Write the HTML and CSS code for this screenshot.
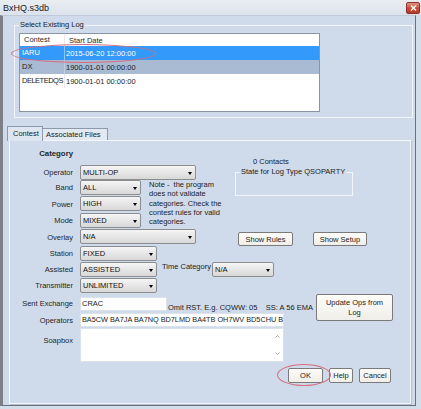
FILE: index.html
```html
<!DOCTYPE html>
<html lang="en">
<head>
    <meta charset="UTF-8">
    <title>BxHQ.s3db</title>
    <link rel="stylesheet" href="styles.css">
</head>
<body>
    <div class="window">
        <div class="titlebar">
            <span class="title">BxHQ.s3db</span>
            <span class="close">
                <svg width="7" height="6" viewBox="0 0 7 6"><path d="M1 0.5 L6 5.5 M6 0.5 L1 5.5" stroke="#fff" stroke-width="1.4"/></svg>
            </span>
        </div>
        <div class="client">
            <fieldset class="log-group">
                <legend>Select Existing Log</legend>
                <div class="log-list">
                    <div class="log-row head"><span class="c1">Contest</span><span class="c2">Start Date</span></div>
                    <div class="log-row selected"><span class="c1">IARU</span><span class="c2">2015-06-20 12:00:00</span></div>
                    <div class="log-row hot"><span class="c1">DX</span><span class="c2">1900-01-01 00:00:00</span></div>
                    <div class="log-row"><span class="c1 tight">DELETEDQS</span><span class="c2">1900-01-01 00:00:00</span></div>
                </div>
                <span class="mark mark-log"></span>
            </fieldset>

            <div class="tabs">
                <div class="tab active">Contest</div>
                <div class="tab">Associated Files</div>
            </div>
            <div class="tab-panel">
                <div class="form">
                    <div class="lbl heading">Category</div>

                    <div class="contacts">
                        <div class="contacts-count">0 Contacts</div>
                        <fieldset class="state-group">
                            <legend>State for Log Type QSOPARTY</legend>
                        </fieldset>
                    </div>

                    <div class="lbl r-op">Operator</div>
                    <div class="ctl r-op"><div class="combo w116"><span>MULTI-OP</span><i class="arrow"></i></div></div>

                    <div class="lbl r-band">Band</div>
                    <div class="ctl r-band"><div class="combo w61"><span>ALL</span><i class="arrow"></i></div></div>

                    <div class="note">Note -&nbsp; the program<br>does not validate<br>categories. Check the<br>contest rules for valid<br>categories.</div>

                    <div class="lbl r-power">Power</div>
                    <div class="ctl r-power"><div class="combo w61"><span>HIGH</span><i class="arrow"></i></div></div>

                    <div class="lbl r-mode">Mode</div>
                    <div class="ctl r-mode"><div class="combo w61"><span>MIXED</span><i class="arrow"></i></div></div>

                    <div class="lbl r-overlay">Overlay</div>
                    <div class="ctl r-overlay">
                        <div class="combo w116"><span>N/A</span><i class="arrow"></i></div>
                        <div class="btn btn-rules">Show Rules</div>
                        <div class="btn btn-setup">Show Setup</div>
                    </div>

                    <div class="lbl r-station">Station</div>
                    <div class="ctl r-station"><div class="combo w77"><span>FIXED</span><i class="arrow"></i></div></div>

                    <div class="lbl r-assisted">Assisted</div>
                    <div class="ctl r-assisted">
                        <div class="combo w77"><span>ASSISTED</span><i class="arrow"></i></div>
                        <span class="time-label">Time Category</span>
                        <div class="combo w62"><span>N/A</span><i class="arrow"></i></div>
                    </div>

                    <div class="lbl r-tx">Transmitter</div>
                    <div class="ctl r-tx"><div class="combo w77"><span>UNLIMITED</span><i class="arrow"></i></div></div>

                    <div class="lbl r-sent">Sent Exchange</div>
                    <div class="ctl r-sent">
                        <div class="field sent-field">CRAC</div>
                        <span class="hint">Omit RST. E.g. CQWW: 05    SS: A 56 EMA</span>
                    </div>

                    <div class="btn btn-update">Update Ops from<br>Log</div>

                    <div class="lbl r-ops">Operators</div>
                    <div class="ctl r-ops"><div class="field ops-field">BA5CW BA7JA BA7NQ BD7LMD BA4TB OH7WV BD5CHU B</div></div>

                    <div class="lbl r-soap soap-label">Soapbox</div>
                    <div class="ctl r-soap">
                        <div class="memo">
                            <div class="memo-scroll">
                                <svg width="5" height="3" viewBox="0 0 5 3"><path d="M0.5 2.5 L2.5 0.5 L4.5 2.5" fill="none" stroke="#9a9a9a" stroke-width="0.9"/></svg>
                                <svg width="5" height="3" viewBox="0 0 5 3"><path d="M0.5 0.5 L2.5 2.5 L4.5 0.5" fill="none" stroke="#9a9a9a" stroke-width="0.9"/></svg>
                            </div>
                        </div>
                    </div>

                    <div class="ctl r-actions actions">
                        <div class="btn btn-ok">OK</div>
                        <div class="btn btn-help">Help</div>
                        <div class="btn btn-cancel">Cancel</div>
                        <span class="mark mark-ok"></span>
                    </div>
                </div>
            </div>
        </div>
    </div>
</body>
</html>
```

FILE: styles.css
```css
body {
    margin: 0;
    font-family: "Liberation Sans", Arial, sans-serif;
    font-size: 7.5px;
    color: #1c1c1c;
    white-space: nowrap;
}

.window {
    width: 421px;
    height: 409px;
    background-color: #d3deeb;
    overflow: hidden;
}

.titlebar {
    height: 15px;
    display: flex;
    align-items: center;
    justify-content: space-between;
    padding: 0 1px 0 3px;
    box-sizing: border-box;
    background: linear-gradient(#eaeef3, #dbe2eb);
}

.title {
    font-size: 9px;
    color: #1a1a1a;
}

.close {
    width: 14px;
    height: 12px;
    box-sizing: border-box;
    border: 1px solid #8f3226;
    border-radius: 2px;
    background: linear-gradient(#e29283, #c94a36 55%, #b93a28);
    display: flex;
    align-items: center;
    justify-content: center;
}

.client {
    width: 416px;
    height: 391px;
    box-sizing: border-box;
    border-left: 3px solid #7c7f85;
    border-right: 1px solid #68717d;
    border-bottom: 1px solid #68717d;
    border-top: 1px solid #bfcad8;
    background-color: #cfdbea;
}

/* group boxes */
fieldset {
    margin: 0;
    min-width: 0;
    box-sizing: border-box;
    border: 1px solid #f2f6fa;
}

legend {
    padding: 0 1px;
    line-height: 10px;
    color: #1c1c1c;
}

.log-group {
    position: relative;
    margin: 4px 0 0 11px;
    width: 399px;
    height: 98px;
    padding: 3px 4px 0 4px;
}

.log-list {
    width: 301px;
    height: 79px;
    box-sizing: border-box;
    border: 1px solid #8a94a3;
    background-color: #fff;
}

.log-row {
    display: flex;
    height: 14px;
    align-items: center;
}

.log-row .c1 {
    flex-shrink: 0;
    width: 45px;
    padding-left: 2px;
    box-sizing: border-box;
    border-right: 1px solid #e6e9ee;
    line-height: 14px;
}

.log-row .c1.tight {
    letter-spacing: -0.5px;
}

.log-row .c2 {
    padding-left: 1px;
}

.log-row.head {
    height: 12px;
    color: #2b2b2b;
}

.log-row.head .c1 {
    padding-left: 4px;
    line-height: 12px;
}

.log-row.head .c2 {
    padding-left: 4px;
}

.log-row.selected {
    background-color: #3399fa;
    color: #fff;
}

.log-row.selected .c1 {
    border-right-color: #8cc4fb;
}

.log-row.hot {
    background-color: #a9bad3;
}

.log-row.hot .c1 {
    border-right-color: #bfcde0;
}

.mark {
    position: absolute;
    box-sizing: border-box;
    border: 1px solid #d46f80;
    border-radius: 50%;
}

.mark-log {
    left: -4px;
    top: 14px;
    width: 145px;
    height: 19px;
}

/* tabs */
.tabs {
    display: flex;
    align-items: flex-end;
    height: 14px;
    margin-top: 8px;
    padding-left: 4px;
}

.tab {
    height: 12px;
    line-height: 11px;
    padding: 0 6px 0 3px;
    box-sizing: border-box;
    border: 1px solid #8c99ab;
    border-bottom: none;
    border-left: none;
    background-color: #e3e9f1;
}

.tab.active {
    position: relative;
    z-index: 1;
    width: 36px;
    height: 15px;
    line-height: 13px;
    margin-bottom: -1px;
    padding-left: 5px;
    border-left: 1px solid #8c99ab;
    background-color: #dde6f0;
}

.tab-panel {
    margin-left: 6px;
    width: 402px;
    height: 264px;
    box-sizing: border-box;
    border: 1px solid #f4f7fb;
    box-shadow: 1px 1px 0 #b3bfcf;
}

/* contest form */
.form {
    display: grid;
    grid-template-columns: 63px 1fr;
    grid-template-rows: 18px 15px 16px 17px 16px 17px 16px 16px 16px 19px 15px 34px 21px;
    column-gap: 7px;
    padding-top: 6px;
}

.lbl {
    grid-column: 1;
    justify-self: end;
    align-self: center;
    line-height: 10px;
    color: #262626;
}

.lbl.heading {
    grid-row: 1;
    align-self: start;
    font-weight: bold;
    font-size: 7.8px;
    line-height: 14px;
}

.ctl {
    grid-column: 2;
    display: flex;
    align-items: flex-start;
}

.r-op { grid-row: 2; }
.r-band { grid-row: 3; }
.r-power { grid-row: 4; }
.r-mode { grid-row: 5; }
.r-overlay { grid-row: 6; }
.r-station { grid-row: 7; }
.r-assisted { grid-row: 8; }
.r-tx { grid-row: 9; }
.r-sent { grid-row: 10; }
.r-ops { grid-row: 11; }
.r-soap { grid-row: 12; }
.r-actions { grid-row: 13; }

.combo {
    display: flex;
    align-items: center;
    justify-content: space-between;
    height: 15px;
    box-sizing: border-box;
    padding: 0 3px 0 2px;
    border: 1px solid #8c8d8f;
    border-radius: 2px;
    background: linear-gradient(#f5f5f5, #e6e6e6 50%, #d8d8d8);
    color: #111;
}

.w116 { width: 116px; }
.w61 { width: 61px; }
.w62 { width: 62px; }
.w77 { width: 77px; }

.arrow {
    width: 0;
    height: 0;
    border-top: 3px solid #000;
    border-left: 2.5px solid transparent;
    border-right: 2.5px solid transparent;
    margin-top: 1px;
}

.note {
    grid-column: 2;
    grid-row: 3 / 6;
    margin-left: 69px;
    line-height: 9.3px;
    color: #222;
}

.contacts {
    grid-column: 2;
    grid-row: 1 / 4;
    margin-left: 155px;
    align-self: start;
}

.contacts-count {
    margin-top: 10px;
    padding-left: 18px;
    line-height: 10px;
}

.state-group {
    width: 118px;
    height: 29px;
    padding: 0 4px;
}

.btn {
    box-sizing: border-box;
    border: 1px solid #7a7a7a;
    border-radius: 2px;
    background: linear-gradient(#fdfcf9, #f0eee8);
    display: flex;
    align-items: center;
    justify-content: center;
    text-align: center;
    color: #1c1c1c;
}

.btn-rules {
    width: 55px;
    height: 14px;
    margin: 3px 0 0 42px;
}

.btn-setup {
    width: 54px;
    height: 14px;
    margin: 3px 0 0 20px;
}

.time-label {
    width: 50px;
    margin-left: 5px;
    line-height: 10px;
}

.field {
    height: 14px;
    box-sizing: border-box;
    border: 1px solid #dbe2ea;
    background-color: #fff;
    padding-left: 1px;
    line-height: 12px;
    overflow: hidden;
}

.sent-field {
    width: 87px;
    margin-top: 3px;
}

.hint {
    align-self: flex-end;
    margin-left: 1px;
    line-height: 10px;
    white-space: pre;
}

.btn-update {
    grid-column: 2;
    grid-row: 10 / 12;
    align-self: start;
    margin-left: 236px;
    width: 77px;
    height: 27px;
    line-height: 10px;
}

.ops-field {
    width: 204px;
    font-size: 7.3px;
}

.soap-label {
    align-self: start;
    margin-top: 8px;
}

.memo {
    width: 204px;
    height: 34px;
    box-sizing: border-box;
    border: 1px solid #dbe2ea;
    background-color: #fff;
    display: flex;
    justify-content: flex-end;
}

.memo-scroll {
    width: 11px;
    display: flex;
    flex-direction: column;
    justify-content: space-between;
    align-items: center;
    padding: 6px 0 6px;
}

.actions {
    position: relative;
    align-self: end;
    padding-left: 208px;
}

.btn-ok {
    width: 35px;
    height: 15px;
}

.btn-help {
    width: 24px;
    height: 15px;
    margin-left: 6px;
}

.btn-cancel {
    width: 32px;
    height: 15px;
    margin-left: 6px;
}

.mark-ok {
    left: 197px;
    top: -4px;
    width: 54px;
    height: 22px;
}
```
